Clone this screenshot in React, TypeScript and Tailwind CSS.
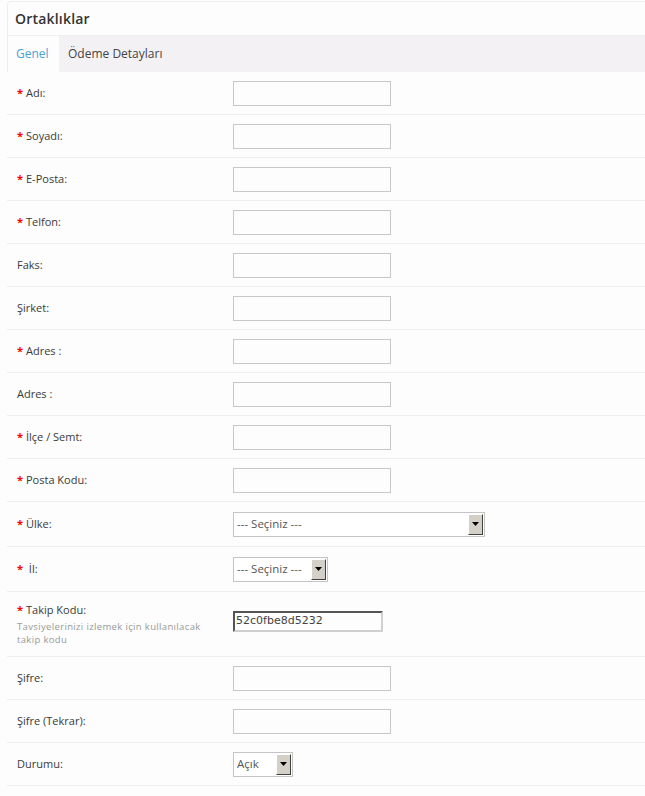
import React from "react";

type Field = {
  label: string;
  required?: boolean;
  kind: "text" | "select" | "code";
  width?: number;
  value?: string;
  help?: string;
};

const fields: Field[] = [
  { label: "Adı:", required: true, kind: "text" },
  { label: "Soyadı:", required: true, kind: "text" },
  { label: "E-Posta:", required: true, kind: "text" },
  { label: "Telfon:", required: true, kind: "text" },
  { label: "Faks:", kind: "text" },
  { label: "Şirket:", kind: "text" },
  { label: "Adres :", required: true, kind: "text" },
  { label: "Adres :", kind: "text" },
  { label: "İlçe / Semt:", required: true, kind: "text" },
  { label: "Posta Kodu:", required: true, kind: "text" },
  { label: "Ülke:", required: true, kind: "select", width: 252, value: "--- Seçiniz ---" },
  { label: " İl:", required: true, kind: "select", width: 95, value: "--- Seçiniz ---" },
  {
    label: "Takip Kodu:",
    required: true,
    kind: "code",
    value: "52c0fbe8d5232",
    help: "Tavsiyelerinizi izlemek için kullanılacak takip kodu",
  },
  { label: "Şifre:", kind: "text" },
  { label: "Şifre (Tekrar):", kind: "text" },
  { label: "Durumu:", kind: "select", width: 60, value: "Açık" },
];

function FakeSelect({ width, value }: { width: number; value: string }) {
  return (
    <div
      className="flex h-[25px] items-stretch border border-[#c4c4c4] bg-white"
      style={{ width }}
    >
      <div className="flex flex-1 items-center pl-[3px] text-[11.5px] text-[#555] whitespace-nowrap overflow-hidden">
        {value}
      </div>
      <div className="m-px flex w-[15px] items-center justify-center border border-t-white border-l-white border-r-[#404040] border-b-[#404040] bg-[#d4d0c8]">
        <svg width="7" height="4" viewBox="0 0 7 4">
          <polygon points="0,0 7,0 3.5,4" fill="#000" />
        </svg>
      </div>
    </div>
  );
}

export default function App() {
  return (
    <div className="min-h-[796px] bg-[#fcfdfc] pl-[7px] pt-[1px] font-['Open_Sans',sans-serif] text-[#333]">
      <div className="rounded-tl-[4px] border-l border-t border-[#efefef]">
        <div className="flex h-[34px] items-center border-b border-[#efefef] pl-[7px]">
          <h1 className="text-[14px] font-semibold tracking-[0.2px] text-[#333]">Ortaklıklar</h1>
        </div>
        <div className="flex h-[36px] bg-[#f3f1f4] text-[12px]">
          <div className="flex w-[51px] items-center bg-[#fcfdfc] pl-[8px] text-[#4aa3d4]">Genel</div>
          <div className="flex items-center pl-[9px] text-[#444]">Ödeme Detayları</div>
        </div>
      </div>
      <div>
        {fields.map((f, i) => {
          const rowH =
            f.kind === "code" ? "h-[65px]" : f.kind === "select" && i !== fields.length - 1 ? "h-[45px]" : "h-[43px]";
          return (
            <div key={i} className={`flex items-center border-b border-[#efefef] ${rowH}`}>
              <div className="w-[226px] pl-[10px] text-[11px] leading-[14px] text-[#3a3a3a]">
                <div>
                  {f.required && <span className="mr-[3px] font-bold text-[#ff0000]">*</span>}
                  {f.label}
                </div>
                {f.help && (
                  <div className="mt-[3px] w-[196px] text-[9.5px] leading-[13px] tracking-[0.35px] text-[#999]">
                    {f.help}
                  </div>
                )}
              </div>
              {f.kind === "text" && (
                <div className="h-[25px] w-[158px] border border-[#c8c8c8] bg-[#fcfdfc]" />
              )}
              {f.kind === "select" && <FakeSelect width={f.width ?? 100} value={f.value ?? ""} />}
              {f.kind === "code" && (
                <div className="-mt-[6px] flex h-[21px] w-[150px] items-center border-2 border-t-[#555] border-l-[#555] border-r-[#d0d0d0] border-b-[#d0d0d0] pl-[1px] font-['DejaVu_Sans',sans-serif] text-[11px] text-[#444]">
                  {f.value}
                </div>
              )}
            </div>
          );
        })}
      </div>
    </div>
  );
}
